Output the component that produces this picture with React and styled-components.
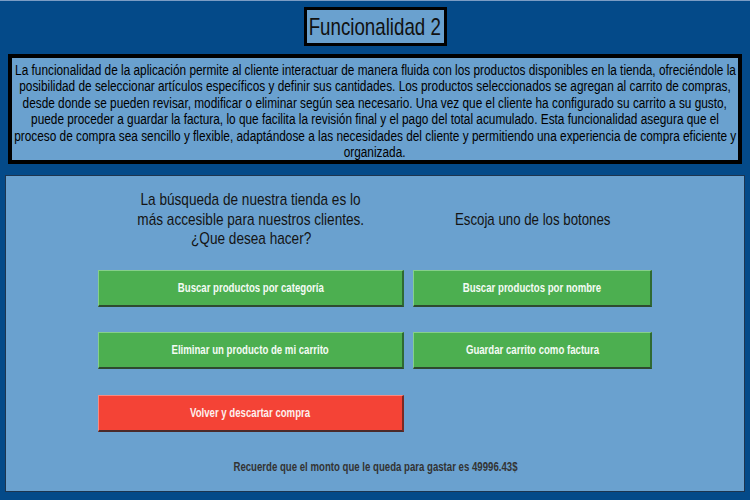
import React from "react";
import styled, { createGlobalStyle } from "styled-components";

const GlobalStyle = createGlobalStyle`
  html, body { margin: 0; padding: 0; }
  body {
    background: #044a89;
    font-family: "Liberation Sans", Arial, sans-serif;
    width: 750px;
    height: 500px;
    overflow: hidden;
  }
`;

const Squeeze = styled.span`
  display: inline-block;
  white-space: nowrap;
  transform: scaleX(${(p) => p.$sx || 0.78});
  transform-origin: center;
`;

const Page = styled.div`
  width: 750px;
  height: 500px;
  box-sizing: border-box;
  border-top: 1px solid #7b9cc4;
  display: flex;
  flex-direction: column;
  align-items: center;
  padding-top: 6px;
`;

const TitleBox = styled.div`
  width: 143px;
  height: 39px;
  box-sizing: border-box;
  border: 3px solid #000;
  background: #6aa1cf;
  display: flex;
  align-items: center;
  justify-content: center;
  font-size: 24px;
  color: #111;
`;

const Description = styled.div`
  margin-top: 8px;
  width: 734px;
  height: 110px;
  box-sizing: border-box;
  border: 4px solid #000;
  background: #6aa1cf;
  padding-top: 4px;
  display: flex;
  flex-direction: column;
  align-items: center;
  font-size: 14px;
  line-height: 16.4px;
  color: #000;
`;

const Panel = styled.div`
  margin-top: 11px;
  width: 740px;
  height: 317px;
  box-sizing: border-box;
  border: 1px solid #1d3550;
  background: #6aa1cf;
  padding-top: 12px;
  display: flex;
  flex-direction: column;
  align-items: center;
`;

const Grid = styled.div`
  display: grid;
  grid-template-columns: 306px 239px;
  grid-template-rows: 56px 37px 37px 37px;
  column-gap: 9px;
  row-gap: 25.5px;
`;

const Label = styled.div`
  padding-top: 7px;
  display: flex;
  flex-direction: column;
  align-items: center;
  justify-content: center;
  font-size: 17px;
  line-height: 19.5px;
  color: #141414;
`;

const Button = styled.button`
  box-sizing: border-box;
  width: 100%;
  height: 37px;
  margin: 0;
  padding: 0;
  display: flex;
  align-items: center;
  justify-content: center;
  font-family: inherit;
  font-weight: bold;
  font-size: 12.5px;
  color: ${(p) => (p.$danger ? "#fdf0ee" : "#f4fbf4")};
  background: ${(p) => (p.$danger ? "#f44336" : "#4caf50")};
  border-style: solid;
  border-width: 1px 2px 2px 1px;
  border-color: ${(p) =>
    p.$danger
      ? "#f98a80 #7a2a24 #4a2a2a #f98a80"
      : "#86cf8a #2f6a32 #2e4a30 #86cf8a"};
  cursor: pointer;
`;

const Footer = styled.div`
  margin-top: 28px;
  font-size: 12.5px;
  font-weight: bold;
  color: #333;
  line-height: 14px;
`;

const descLines = [
  "La funcionalidad de la aplicación permite al cliente interactuar de manera fluida con los productos disponibles en la tienda, ofreciéndole la",
  "posibilidad de seleccionar artículos específicos y definir sus cantidades. Los productos seleccionados se agregan al carrito de compras,",
  "desde donde se pueden revisar, modificar o eliminar según sea necesario. Una vez que el cliente ha configurado su carrito a su gusto,",
  "puede proceder a guardar la factura, lo que facilita la revisión final y el pago del total acumulado. Esta funcionalidad asegura que el",
  "proceso de compra sea sencillo y flexible, adaptándose a las necesidades del cliente y permitiendo una experiencia de compra eficiente y",
  "organizada.",
];

const buttons = [
  { text: "Buscar productos por categoría" },
  { text: "Buscar productos por nombre" },
  { text: "Eliminar un producto de mi carrito" },
  { text: "Guardar carrito como factura" },
  { text: "Volver y descartar compra", danger: true },
];

export default function App() {
  return (
    <>
      <GlobalStyle />
      <Page>
        <TitleBox>
          <Squeeze $sx={0.78}>Funcionalidad 2</Squeeze>
        </TitleBox>
        <Description>
          {descLines.map((l, i) => (
            <Squeeze key={i} $sx={0.845}>
              {l}
            </Squeeze>
          ))}
        </Description>
        <Panel>
          <Grid>
            <Label>
              <Squeeze $sx={0.8}>La búsqueda de nuestra tienda es lo</Squeeze>
              <Squeeze $sx={0.8}>más accesible para nuestros clientes.</Squeeze>
              <Squeeze $sx={0.8}>¿Que desea hacer?</Squeeze>
            </Label>
            <Label>
              <Squeeze $sx={0.78}>Escoja uno de los botones</Squeeze>
            </Label>
            {buttons.map((b) => (
              <Button key={b.text} $danger={b.danger}>
                <Squeeze $sx={0.77}>{b.text}</Squeeze>
              </Button>
            ))}
          </Grid>
          <Footer>
            <Squeeze $sx={0.77}>
              Recuerde que el monto que le queda para gastar es 49996.43$
            </Squeeze>
          </Footer>
        </Panel>
      </Page>
    </>
  );
}
